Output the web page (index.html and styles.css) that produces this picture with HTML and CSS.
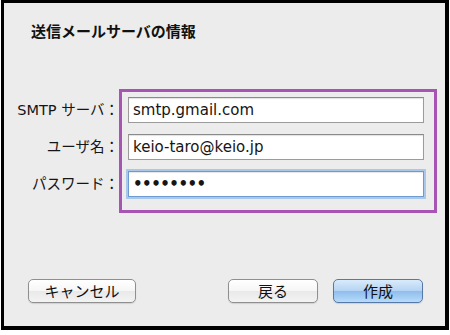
FILE: index.html
```html
<!DOCTYPE html>
<html lang="ja">
<head>
<meta charset="utf-8">
<link rel="stylesheet" href="styles.css">
</head>
<body>
<div class="frame">
  <h1 class="title">送信メールサーバの情報</h1>
  <div class="form">
    <div class="labels">
      <label class="label">SMTP サーバ：</label>
      <label class="label">ユーザ名：</label>
      <label class="label">パスワード：</label>
    </div>
    <div class="highlight">
      <input class="field" type="text" value="smtp.gmail.com">
      <input class="field" type="text" value="keio-taro@keio.jp">
      <input class="field focused" type="password" value="abcdefgh">
    </div>
  </div>
  <div class="buttons">
    <button class="btn cancel">キャンセル</button>
    <div class="spacer"></div>
    <button class="btn">戻る</button>
    <button class="btn primary">作成</button>
  </div>
</div>
</body>
</html>
```

FILE: styles.css
```css
html, body {
  margin: 0;
  padding: 0;
  background: #ffffff;
}
body {
  font-family: "DejaVu Sans", "Noto Sans CJK JP", sans-serif;
  color: #151515;
}
.frame {
  box-sizing: border-box;
  margin-left: 1px;
  width: 448px;
  height: 330px;
  border-top: 3px solid #000;
  border-left: 3px solid #000;
  border-right: 4px solid #000;
  border-bottom: 4px solid #000;
  background: #ececec;
  display: flex;
  flex-direction: column;
}
.title {
  margin: 18px 0 0 27px;
  font-size: 15px;
  line-height: 20px;
  font-weight: bold;
  font-family: "Noto Sans CJK JP", sans-serif;
  color: #111;
}
.form {
  display: flex;
  margin-top: 48px;
}
.labels {
  width: 115px;
  box-sizing: border-box;
  padding-top: 8px;
  display: flex;
  flex-direction: column;
  gap: 11px;
}
.label {
  height: 26px;
  line-height: 26px;
  text-align: right;
  font-size: 14.5px;
  white-space: nowrap;
}
.highlight {
  width: 318px;
  box-sizing: border-box;
  border: 3px solid #a655b3;
  padding: 5px 10px 13px 6px;
  display: flex;
  flex-direction: column;
  gap: 11px;
}
.field {
  box-sizing: border-box;
  height: 26px;
  width: 100%;
  margin: 0;
  padding: 0 4px;
  border: 1px solid #9b9b9b;
  border-top-color: #8a8a8a;
  background: #fff;
  box-shadow: inset 0 1px 1px rgba(0,0,0,0.12);
  font-family: "DejaVu Sans", "Noto Sans CJK JP", sans-serif;
  font-size: 15px;
  color: #151515;
  outline: none;
}
.field.focused {
  border: 1px solid #6d9bd1;
  box-shadow: 0 0 0 2px #a9c8ea, inset 0 1px 1px rgba(0,0,0,0.1);
  font-size: 15px;
  font-weight: bold;
  letter-spacing: -0.5px;
}
.buttons {
  margin-top: auto;
  display: flex;
  align-items: center;
  padding: 0 22px 23px 24px;
  gap: 15px;
}
.spacer {
  flex: 1;
}
.btn {
  box-sizing: border-box;
  height: 24px;
  width: 90px;
  margin: 0;
  padding: 0;
  border: 1px solid #8f8f8f;
  border-radius: 5px;
  background: linear-gradient(#ffffff 0%, #f6f6f6 50%, #e9e9e9 51%, #f3f3f3 100%);
  font-family: "Noto Sans CJK JP", sans-serif;
  font-size: 15px;
  line-height: 22px;
  color: #111;
  box-shadow: 0 1px 1px rgba(0,0,0,0.12);
}
.btn.cancel {
  width: 108px;
}
.spacer + .btn {
  margin-left: -15px;
}
.btn.primary {
  border-color: #5679a8;
  background: linear-gradient(#d9ebfb 0%, #b4d3f3 50%, #8fbdec 51%, #b7dbfb 100%);
}
```
